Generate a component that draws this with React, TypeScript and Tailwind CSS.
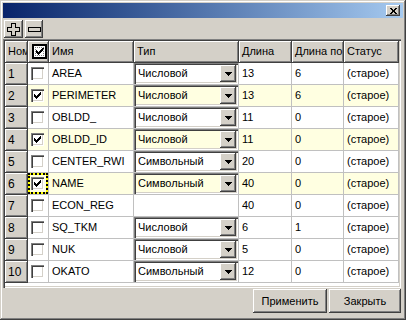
import React from 'react';

type Row = { n: number; name: string; type: string; len: string; dec: string; on: boolean };

const ROWS: Row[] = [
  { n: 1, name: 'AREA', type: 'Числовой', len: '13', dec: '6', on: false },
  { n: 2, name: 'PERIMETER', type: 'Числовой', len: '13', dec: '6', on: true },
  { n: 3, name: 'OBLDD_', type: 'Числовой', len: '11', dec: '0', on: false },
  { n: 4, name: 'OBLDD_ID', type: 'Числовой', len: '11', dec: '0', on: true },
  { n: 5, name: 'CENTER_RWI', type: 'Символьный', len: '20', dec: '0', on: false },
  { n: 6, name: 'NAME', type: 'Символьный', len: '40', dec: '0', on: true },
  { n: 7, name: 'ECON_REG', type: '', len: '40', dec: '0', on: false },
  { n: 8, name: 'SQ_TKM', type: 'Числовой', len: '6', dec: '1', on: false },
  { n: 9, name: 'NUK', type: 'Числовой', len: '5', dec: '0', on: false },
  { n: 10, name: 'OKATO', type: 'Символьный', len: '12', dec: '0', on: false },
];

const raised = 'bg-[#d4d0c8] shadow-[inset_-1px_-1px_#404040,inset_1px_1px_#ffffff,inset_-2px_-2px_#808080]';
const headCell =
  'h-[22px] flex items-center pl-[3px] overflow-hidden whitespace-nowrap bg-[#d4d0c8] border-r border-b border-[#404040] shadow-[inset_1px_1px_#ffffff,inset_-1px_-1px_#808080]';
const cell = 'h-[22px] flex items-center pl-[3px] overflow-hidden whitespace-nowrap border-r border-b border-[#c0c0c0]';

function Check({ on }: { on: boolean }) {
  return (
    <div className="w-[13px] h-[13px] bg-white shadow-[inset_1px_1px_#808080,inset_2px_2px_#404040,inset_-1px_-1px_#ffffff,inset_-2px_-2px_#d4d0c8] flex items-center justify-center">
      {on && (
        <svg width="7" height="7" viewBox="0 0 7 7" shapeRendering="crispEdges">
          <path d="M0 2h1v3H0zM1 3h1v3H1zM2 4h1v3H2zM3 3h1v3H3zM4 2h1v3H4zM5 1h1v3H5zM6 0h1v3H6z" fill="#000" />
        </svg>
      )}
    </div>
  );
}

function Combo({ value, bg }: { value: string; bg: string }) {
  return (
    <div className={`flex-1 h-[21px] flex items-center ${bg} shadow-[inset_1px_1px_#808080,inset_2px_2px_#404040,inset_-1px_-1px_#ffffff,inset_-2px_-2px_#d4d0c8] pl-[4px] pr-[2px]`}>
      <span className="flex-1 truncate">{value}</span>
      <div className={`w-[16px] h-[17px] ${raised} flex items-center justify-center`}>
        <svg width="7" height="4" viewBox="0 0 7 4" shapeRendering="crispEdges">
          <path d="M0 0h7v1H0zM1 1h5v1H1zM2 2h3v1H2zM3 3h1v1H3z" fill="#000" />
        </svg>
      </div>
    </div>
  );
}

export default function App() {
  return (
    <div className="w-[406px] h-[320px] bg-[#d4d0c8] p-[3px] flex flex-col font-['Liberation_Sans',Arial,sans-serif] text-[11px] text-black shadow-[inset_-1px_-1px_#404040,inset_1px_1px_#d4d0c8,inset_-2px_-2px_#808080,inset_2px_2px_#ffffff]">
      {/* title */}
      <div className="h-[15px] flex items-center justify-end bg-gradient-to-r from-[#0a246a] to-[#a6caf0] pr-[3px]">
        <div className={`w-[14px] h-[11px] ${raised} flex items-center justify-center`}>
          <svg width="7" height="6" viewBox="0 0 7 6" shapeRendering="crispEdges">
            <path d="M0 0h2v1H0zM5 0h2v1H5zM1 1h2v1H1zM4 1h2v1H4zM2 2h3v2H2zM1 4h2v1H1zM4 4h2v1H4zM0 5h2v1H0zM5 5h2v1H5z" fill="#000" />
          </svg>
        </div>
      </div>

      {/* toolbar */}
      <div className="mt-[2px] h-[18px] flex gap-[2px] pl-[1px]">
        <button className={`w-[19px] h-[18px] ${raised} flex items-center justify-center`}>
          <svg width="13" height="13" viewBox="0 0 13 13" shapeRendering="crispEdges">
            <path d="M4.5 0.5h4v4h4v4h-4v4h-4v-4h-4v-4h4z" fill="none" stroke="#000" />
          </svg>
        </button>
        <button className={`w-[18px] h-[18px] ${raised} flex items-center justify-center`}>
          <svg width="13" height="5" viewBox="0 0 13 5" shapeRendering="crispEdges">
            <path d="M0.5 0.5h12v4h-12z" fill="none" stroke="#000" />
          </svg>
        </button>
      </div>

      {/* grid */}
      <div className="mt-[1px] h-[249px] w-[398px] bg-white shadow-[inset_1px_1px_#808080,inset_2px_2px_#404040,inset_-1px_-1px_#ffffff,inset_-2px_-2px_#d4d0c8] p-[2px]">
        <div className="grid grid-cols-[23px_21px_85px_105px_53px_52px_55px]">
          <div className={headCell}>Ном</div>
          <div className={`${headCell} justify-center pl-0`}>
            <div className="w-[15px] h-[15px] border-2 border-black bg-white flex items-center justify-center outline-1 outline-dotted outline-[#808080] -outline-offset-4">
              <svg width="8" height="7" viewBox="0 0 8 7" shapeRendering="crispEdges">
                <path d="M0 2h1v3H0zM1 3h1v3H1zM2 4h1v3H2zM3 3h1v3H3zM4 2h1v3H4zM5 1h1v3H5zM6 0h1v3H6zM7 0h1v2H7z" fill="#000" />
              </svg>
            </div>
          </div>
          <div className={headCell}>Имя</div>
          <div className={headCell}>Тип</div>
          <div className={headCell}>Длина</div>
          <div className={headCell}>Длина по</div>
          <div className={headCell}>Статус</div>

          {ROWS.map((r) => {
            const bg = r.on ? 'bg-[#ffffe1]' : 'bg-white';
            return (
              <React.Fragment key={r.n}>
                <div className="h-[22px] flex items-center pl-[3px] text-[12px] bg-[#d4d0c8] border-r border-b border-[#404040] shadow-[inset_1px_1px_#ffffff,inset_-1px_-1px_#808080]">
                  {r.n}
                </div>
                {r.n === 6 ? (
                  <div className="h-[22px] border-r border-b border-[#c0c0c0]">
                    <div className="h-full border-2 border-dotted border-black bg-[#ffff00]">
                      <div className={`h-full ${bg} flex items-center pl-[1px]`}>
                        <Check on={r.on} />
                      </div>
                    </div>
                  </div>
                ) : (
                  <div className={`${cell} ${bg} pl-[3px]`}>
                    <Check on={r.on} />
                  </div>
                )}
                <div className={`${cell} ${bg}`}>{r.name}</div>
                <div className={`h-[22px] flex items-center border-r border-b border-[#c0c0c0] ${bg}`}>
                  {r.type && <Combo value={r.type} bg={bg} />}
                </div>
                <div className={`${cell} ${bg}`}>{r.len}</div>
                <div className={`${cell} ${bg}`}>{r.dec}</div>
                <div className={`${cell} ${bg}`}>(старое)</div>
              </React.Fragment>
            );
          })}
        </div>
      </div>

      {/* buttons */}
      <div className="mt-[1px] h-[24px] w-[398px] flex justify-end gap-[2px]">
        <button className={`w-[74px] h-[24px] ${raised}`}>Применить</button>
        <button className={`w-[72px] h-[24px] ${raised}`}>Закрыть</button>
      </div>
    </div>
  );
}
